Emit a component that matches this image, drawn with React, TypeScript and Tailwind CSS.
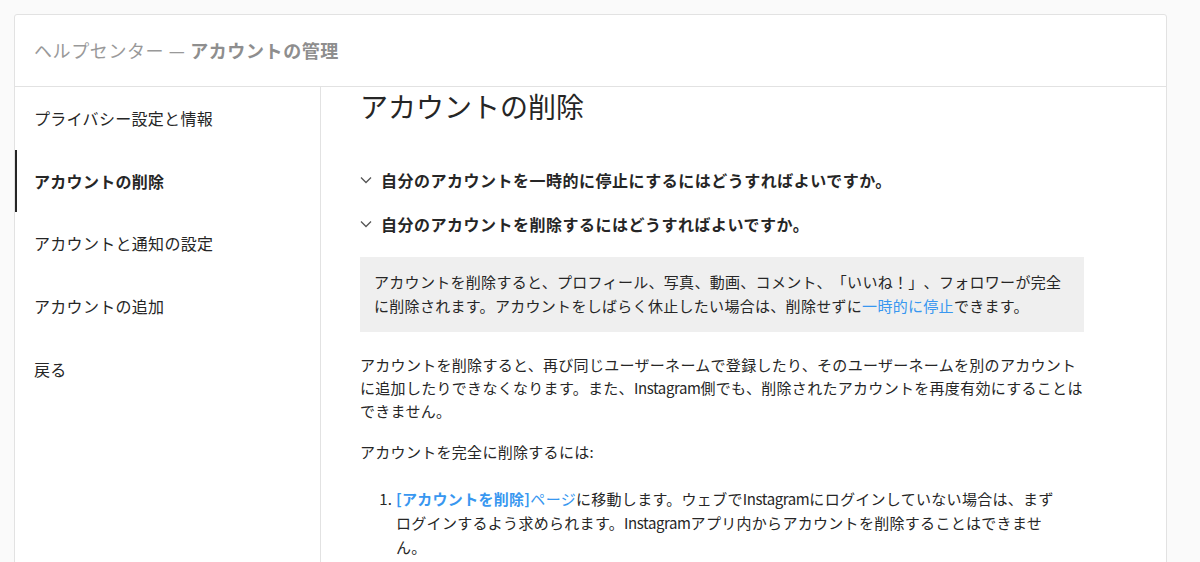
import React from 'react'

const font = { fontFamily: '"Noto Sans CJK JP", "Noto Sans", sans-serif' }

const navItems = [
  { label: 'プライバシー設定と情報', active: false },
  { label: 'アカウントの削除', active: true },
  { label: 'アカウントと通知の設定', active: false },
  { label: 'アカウントの追加', active: false },
  { label: '戻る', active: false },
]

const Chevron = () => (
  <svg width="12" height="8" viewBox="0 0 12 8" className="shrink-0" fill="none">
    <path d="M1 1.5 L6 6.5 L11 1.5" stroke="#555" strokeWidth="1.3" />
  </svg>
)

// the latin brand name is set a little tighter than the kana around it
const Ig = () => <span className="tracking-[-0.4px]">Instagram</span>

const App = () => {
  return (
    <div className="min-h-[562px] bg-[#fafafa] pt-[14px] pl-[14px] overflow-hidden [text-spacing-trim:space-all]" style={font}>
      <div className="w-[1153px] h-[700px] bg-white border border-[#e2e2e2] rounded-[3px] flex flex-col">
        <header className="h-[72px] shrink-0 border-b border-[#e2e2e2] flex items-center px-[19px]">
          <h1 className="text-[18px] tracking-[0.6px] text-[#999]">
            ヘルプセンター — <span className="font-bold text-[#8e8e8e]">アカウントの管理</span>
          </h1>
        </header>

        <div className="flex flex-1">
          <nav className="w-[306px] shrink-0 border-r border-[#e2e2e2]">
            {navItems.map(item => (
              <div
                key={item.label}
                className={
                  item.active
                    ? 'h-[62.6px] flex items-center pl-[17px] border-l-2 border-[#262626] text-[16px] tracking-[0.3px] font-bold text-[#262626]'
                    : 'h-[62.6px] flex items-center pl-[19px] text-[16px] tracking-[0.3px] text-[#262626]'
                }
              >
                {item.label}
              </div>
            ))}
          </nav>

          <main className="flex-1 pl-[39px] text-[#262626]">
            <h2 className="text-[28px] leading-[36px] mt-[1px]">アカウントの削除</h2>

            <div className="mt-[44px] flex flex-col gap-[20px]">
              <div className="flex items-center gap-[9px] text-[16px] tracking-[0.5px] font-bold leading-[24px]">
                <Chevron />
                自分のアカウントを一時的に停止にするにはどうすればよいですか。
              </div>
              <div className="flex items-center gap-[9px] text-[16px] tracking-[0.5px] font-bold leading-[24px]">
                <Chevron />
                自分のアカウントを削除するにはどうすればよいですか。
              </div>
            </div>

            <div className="w-[724px] mt-[21px] bg-[#efefef] px-[14px] pt-[13px] pb-[14px] text-[15px] tracking-[0.3px] leading-[24px]">
              アカウントを削除すると、プロフィール、写真、動画、コメント、「いいね！」、フォロワーが完全に削除されます。アカウントをしばらく休止したい場合は、削除せずに<span className="text-[#3897f0]">一時的に停止</span>できます。
            </div>

            <div className="w-[724px] text-[15px] tracking-[0.3px] leading-[23px]">
              <p className="mt-[21px]">
                アカウントを削除すると、再び同じユーザーネームで登録したり、そのユーザーネームを別のアカウントに追加したりできなくなります。また、<Ig />側でも、削除されたアカウントを再度有効にすることはできません。
              </p>
              <p className="mt-[18px]">アカウントを完全に削除するには:</p>
              <ol className="mt-[24px] pl-[36px] pr-[27px] list-decimal leading-[24px]">
                <li>
                  <span className="text-[#3897f0]"><span className="font-bold">[アカウントを削除]</span>ページ</span>に移動します。ウェブで<Ig />にログインしていない場合は、まずログインするよう求められます。<Ig />アプリ内からアカウントを削除することはできません。
                </li>
              </ol>
            </div>
          </main>
        </div>
      </div>
    </div>
  )
}

export default App
